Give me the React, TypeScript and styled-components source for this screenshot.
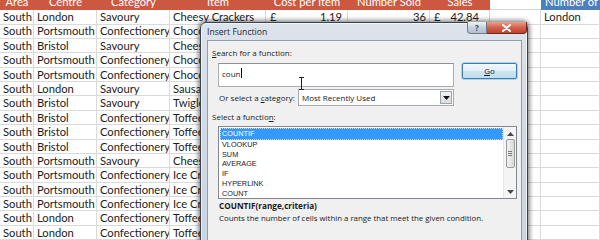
import React from "react";
import styled, { createGlobalStyle } from "styled-components";

const GlobalStyle = createGlobalStyle`
  html, body {
    margin: 0;
    padding: 0;
    background: #ffffff;
    overflow: hidden;
  }
`;

const COLS = "34px 63px 73px 96px 82px 82px 60px 51px 1fr";

type Row = {
  centre: string;
  category: string;
  item: string;
};

const rows: Row[] = [
  { centre: "London", category: "Savoury", item: "Cheesy Crackers" },
  { centre: "Portsmouth", category: "Confectionery", item: "Chocolate Bar" },
  { centre: "Bristol", category: "Savoury", item: "Cheese Straws" },
  { centre: "Portsmouth", category: "Confectionery", item: "Chocolate Bar" },
  { centre: "Portsmouth", category: "Confectionery", item: "Chocolate Bar" },
  { centre: "London", category: "Savoury", item: "Sausage Roll" },
  { centre: "Bristol", category: "Savoury", item: "Twiglets" },
  { centre: "Bristol", category: "Confectionery", item: "Toffee" },
  { centre: "Bristol", category: "Confectionery", item: "Toffee" },
  { centre: "Bristol", category: "Confectionery", item: "Toffee" },
  { centre: "Portsmouth", category: "Savoury", item: "Cheese Straws" },
  { centre: "Portsmouth", category: "Confectionery", item: "Ice Cream" },
  { centre: "Portsmouth", category: "Confectionery", item: "Ice Cream" },
  { centre: "Portsmouth", category: "Confectionery", item: "Ice Cream" },
  { centre: "London", category: "Confectionery", item: "Toffee" },
  { centre: "London", category: "Confectionery", item: "Toffee" },
];

const functions = ["COUNTIF", "VLOOKUP", "SUM", "AVERAGE", "IF", "HYPERLINK", "COUNT"];

function App() {
  return (
    <Screen>
      <GlobalStyle />
      <Sheet>
        <HeaderRow>
          <HeadCell $tone="red">Area</HeadCell>
          <HeadCell $tone="red">Centre</HeadCell>
          <HeadCell $tone="red">Category</HeadCell>
          <HeadCell $tone="red">Item</HeadCell>
          <HeadCell $tone="red">Cost per Item</HeadCell>
          <HeadCell $tone="red">Number Sold</HeadCell>
          <HeadCell $tone="red">Sales</HeadCell>
          <HeadCell $tone="none" />
          <HeadCell $tone="blue" $left>Number of Items</HeadCell>
        </HeaderRow>
        {rows.map((r, i) => (
          <DataRow key={i}>
            <Cell>South</Cell>
            <Cell>{r.centre}</Cell>
            <Cell>{r.category}</Cell>
            <Cell>{r.item}</Cell>
            <MoneyCell>
              {i === 0 && (
                <>
                  <span>£</span>
                  <span>1.19</span>
                </>
              )}
            </MoneyCell>
            <Cell $right>{i === 0 ? "36" : ""}</Cell>
            <MoneyCell $pad={10}>
              {i === 0 && (
                <>
                  <span>£</span>
                  <span>42.84</span>
                </>
              )}
            </MoneyCell>
            <Cell />
            <Cell>{i === 0 ? "London" : ""}</Cell>
          </DataRow>
        ))}
      </Sheet>

      <Dialog>
        <TitleBar>
          <Title>Insert Function</Title>
          <Captions>
            <HelpButton>?</HelpButton>
            <CloseButton>
              <svg width="11" height="8" viewBox="0 0 11 8">
                <path d="M2 1 L9 7 M9 1 L2 7" stroke="#ffffff" strokeWidth="2" strokeLinecap="round" />
              </svg>
            </CloseButton>
          </Captions>
        </TitleBar>
        <Client>
          <Label>
            <u>S</u>earch for a function:
          </Label>
          <SearchRow>
            <TextBox>
              coun<Caret />
            </TextBox>
            <GoButton>
              <u>G</u>o
            </GoButton>
          </SearchRow>
          <CategoryRow>
            <CategoryLabel>
              Or select a <u>c</u>ategory:
            </CategoryLabel>
            <Select>
              <SelectText>Most Recently Used</SelectText>
              <SelectArrow>
                <svg width="7" height="4" viewBox="0 0 7 4">
                  <path d="M0 0 H7 L3.5 4 Z" fill="#111" />
                </svg>
              </SelectArrow>
            </Select>
          </CategoryRow>
          <Label $gap={4}>
            Select a functio<u>n</u>:
          </Label>
          <ListBox>
            <Items>
              {functions.map((f, i) => (
                <Item key={f} $selected={i === 0}>
                  {f}
                </Item>
              ))}
            </Items>
            <ScrollBar>
              <svg width="7" height="4" viewBox="0 0 7 4">
                <path d="M0 4 H7 L3.5 0 Z" fill="#4a4a4a" />
              </svg>
              <Thumb>
                <Grip />
                <Grip />
                <Grip />
              </Thumb>
              <ScrollSpacer />
              <svg width="7" height="4" viewBox="0 0 7 4">
                <path d="M0 0 H7 L3.5 4 Z" fill="#4a4a4a" />
              </svg>
            </ScrollBar>
          </ListBox>
          <Signature>COUNTIF(range,criteria)</Signature>
          <Description>Counts the number of cells within a range that meet the given condition.</Description>
        </Client>
        <IBeam width="7" height="13" viewBox="0 0 7 13">
          <path d="M1 0.5 H6 M3.5 0.5 V12.5 M1 12.5 H6" stroke="#222" strokeWidth="1" fill="none" />
        </IBeam>
      </Dialog>
    </Screen>
  );
}

export default App;

const Screen = styled.div`
  position: relative;
  width: 600px;
  height: 240px;
  overflow: hidden;
  background: #ffffff;
`;

const Sheet = styled.div`
  display: flex;
  flex-direction: column;
  font-family: Lato, "Liberation Sans", sans-serif;
  font-size: 11.2px;
  color: #1c1c1c;
`;

const HeaderRow = styled.div`
  display: grid;
  grid-template-columns: ${COLS};
  height: 10px;
  overflow: hidden;
`;

const HeadCell = styled.div<{ $tone: "red" | "blue" | "none"; $left?: boolean }>`
  display: flex;
  align-items: flex-end;
  justify-content: ${(p) => (p.$left ? "flex-start" : "center")};
  padding: 0 0 2px ${(p) => (p.$left ? "4px" : "0")};
  line-height: 10px;
  white-space: nowrap;
  overflow: hidden;
  color: #ffffff;
  background: ${(p) => (p.$tone === "red" ? "#cd5840" : p.$tone === "blue" ? "#4b80bf" : "#ffffff")};
  border-bottom: 1px solid ${(p) => (p.$tone === "none" ? "#d6d6d6" : "transparent")};
`;

const DataRow = styled.div`
  display: grid;
  grid-template-columns: ${COLS};
  height: 14.4px;
`;

const Cell = styled.div<{ $right?: boolean }>`
  box-sizing: border-box;
  padding: 0 ${(p) => (p.$right ? "3px" : "0")} 0 3px;
  line-height: 14.4px;
  text-align: ${(p) => (p.$right ? "right" : "left")};
  white-space: nowrap;
  overflow: hidden;
  border-right: 1px solid #dadada;
  border-bottom: 1px solid #dadada;
`;

const MoneyCell = styled.div<{ $pad?: number }>`
  box-sizing: border-box;
  display: flex;
  justify-content: space-between;
  padding: 0 ${(p) => p.$pad ?? 5}px 0 4px;
  line-height: 14.4px;
  border-right: 1px solid #dadada;
  border-bottom: 1px solid #dadada;
`;

const Dialog = styled.div`
  position: absolute;
  left: 200px;
  top: 22px;
  width: 328px;
  height: 232px;
  box-sizing: border-box;
  display: flex;
  flex-direction: column;
  border: 1px solid #39414d;
  border-radius: 6px 6px 0 0;
  background: linear-gradient(180deg, #dde3ea 0%, #d2dae4 40%, #c9d4e1 100%);
  box-shadow: 0 0 4px 2px rgba(0, 0, 0, 0.45), inset 0 0 0 1px rgba(255, 255, 255, 0.6);
  font-family: "Open Sans", "Noto Sans", sans-serif;
  color: #1a1a1a;
`;

const TitleBar = styled.div`
  height: 17px;
  display: flex;
  justify-content: space-between;
  align-items: flex-start;
`;

const Title = styled.div`
  padding: 3px 0 0 6px;
  font-size: 8.6px;
  line-height: 12px;
  color: #1b2430;
`;

const Captions = styled.div`
  display: flex;
  margin-top: -1px;
`;

const HelpButton = styled.div`
  width: 20px;
  height: 12px;
  box-sizing: border-box;
  border: 1px solid #6f7c8c;
  border-top: none;
  border-radius: 0 0 0 4px;
  background: linear-gradient(180deg, #eef2f6 0%, #c4cfdb 55%, #b0bfcf 100%);
  color: #3c4654;
  font-size: 8px;
  font-weight: 700;
  line-height: 11px;
  text-align: center;
`;

const CloseButton = styled.div`
  width: 40px;
  height: 12px;
  box-sizing: border-box;
  border: 1px solid #6b2a20;
  border-top: none;
  border-left: none;
  border-radius: 0 0 4px 0;
  background: linear-gradient(180deg, #e8a08c 0%, #d2624b 50%, #c2402a 100%);
  display: flex;
  align-items: center;
  justify-content: center;
`;

const Client = styled.div`
  flex: 1;
  margin: 0 5px 0 6px;
  padding: 5px 0 0 4px;
  background: #f0f0f0;
  border: 1px solid #8e9fb4;
  border-bottom: none;
  display: flex;
  flex-direction: column;
  align-items: flex-start;
  font-size: 8px;
`;

const Label = styled.div<{ $gap?: number }>`
  margin-top: ${(p) => p.$gap ?? 0}px;
  line-height: 14px;
  white-space: nowrap;
`;

const SearchRow = styled.div`
  display: flex;
  align-items: flex-start;
  gap: 8px;
  margin: 3px 0 0 6px;
`;

const TextBox = styled.div`
  width: 236px;
  height: 24px;
  box-sizing: border-box;
  padding: 4px 0 0 3px;
  background: #ffffff;
  border: 1px solid #abadb3;
  border-top-color: #8e9196;
  line-height: 11px;
  display: flex;
  align-items: flex-start;
`;

const Caret = styled.span`
  display: inline-block;
  width: 1px;
  height: 10px;
  margin-left: 1px;
  background: #000;
`;

const GoButton = styled.div`
  width: 55px;
  height: 16px;
  box-sizing: border-box;
  border: 1px solid #3d7bad;
  border-radius: 2px;
  box-shadow: 0 0 0 1px #a9d4ef;
  background: linear-gradient(180deg, #f3f8fb 0%, #e1eef6 50%, #cde4f1 51%, #c2ddef 100%);
  text-align: center;
  line-height: 14px;
`;

const CategoryRow = styled.div`
  display: flex;
  align-items: center;
  margin: 2px 0 0 7px;
`;

const CategoryLabel = styled.div`
  width: 79px;
  white-space: nowrap;
`;

const Select = styled.div`
  width: 156px;
  height: 17px;
  box-sizing: border-box;
  background: #ffffff;
  border: 1px solid #a5acb5;
  display: flex;
  align-items: stretch;
`;

const SelectText = styled.div`
  flex: 1;
  padding-left: 3px;
  line-height: 15px;
`;

const SelectArrow = styled.div`
  width: 12px;
  margin: 1px;
  box-sizing: border-box;
  border: 1px solid #9aa3ad;
  background: linear-gradient(180deg, #f4f4f4, #dcdcdc);
  display: flex;
  align-items: center;
  justify-content: center;
`;

const ListBox = styled.div`
  width: 299px;
  height: 73px;
  box-sizing: border-box;
  margin: 2px 0 0 6px;
  background: #ffffff;
  border: 1px solid #828790;
  display: flex;
`;

const Items = styled.div`
  flex: 1;
  padding: 1px 0 0 1px;
  display: flex;
  flex-direction: column;
  font-family: "Liberation Sans", Arial, sans-serif;
  font-size: 7.3px;
`;

const Item = styled.div<{ $selected?: boolean }>`
  height: ${(p) => (p.$selected ? "11.8px" : "9.8px")};
  line-height: ${(p) => (p.$selected ? "12px" : "9.8px")};
  padding-left: 2px;
  box-sizing: border-box;
  color: ${(p) => (p.$selected ? "#ffffff" : "#1a1a1a")};
  background: ${(p) => (p.$selected ? "#3399ff" : "transparent")};
  outline: ${(p) => (p.$selected ? "1px dotted #b9dcff" : "none")};
  outline-offset: -1px;
`;

const ScrollBar = styled.div`
  width: 13px;
  display: flex;
  flex-direction: column;
  align-items: center;
  padding: 5px 0 4px;
  box-sizing: border-box;
  background: #f4f4f4;
  border-left: 1px solid #e6e6e6;
`;

const Thumb = styled.div`
  width: 9px;
  height: 29px;
  margin-top: 3px;
  box-sizing: border-box;
  border: 1px solid #9a9a9a;
  border-radius: 2px;
  background: linear-gradient(90deg, #f2f2f2, #d9d9d9);
  display: flex;
  flex-direction: column;
  align-items: center;
  justify-content: center;
  gap: 1px;
`;

const Grip = styled.div`
  width: 4px;
  height: 1px;
  background: #7b7b7b;
`;

const ScrollSpacer = styled.div`
  flex: 1;
`;

const Signature = styled.div`
  margin: 1px 0 0 7px;
  font-weight: 700;
  line-height: 12px;
  font-size: 8.2px;
`;

const Description = styled.div`
  margin-left: 7px;
  line-height: 13px;
  font-size: 7.85px;
  white-space: nowrap;
`;

const IBeam = styled.svg`
  position: absolute;
  left: 97px;
  top: 54px;
`;
